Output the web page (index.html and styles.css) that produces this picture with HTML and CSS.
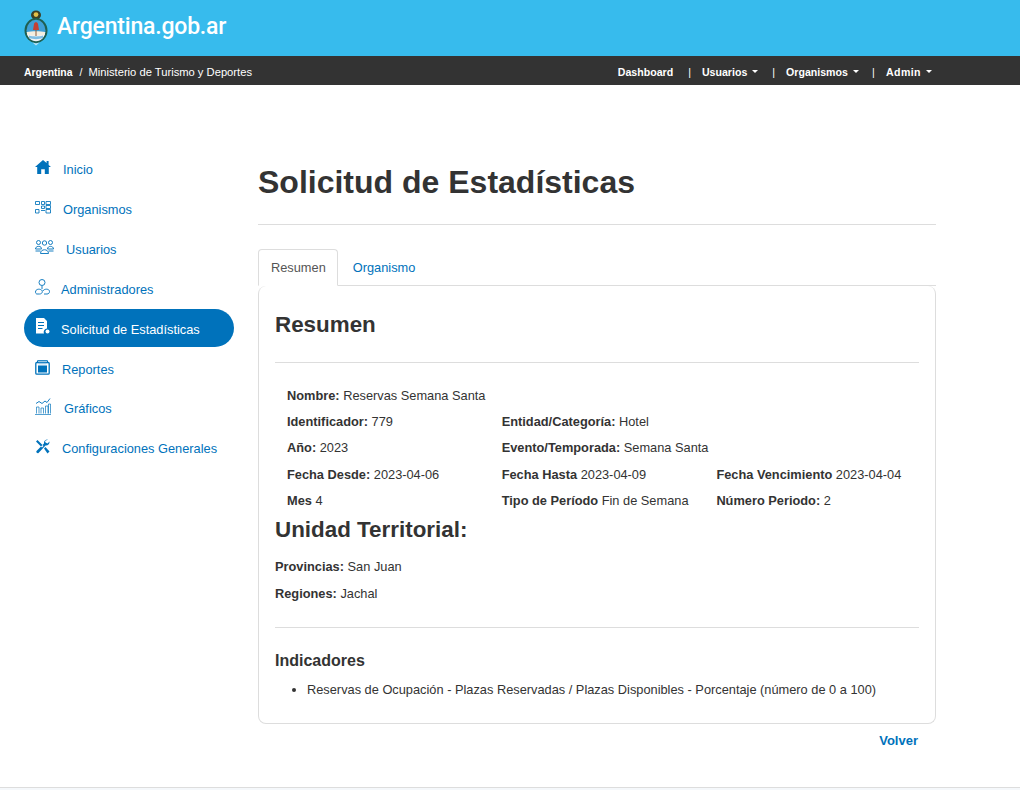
FILE: index.html
```html
<!DOCTYPE html>
<html lang="es">
<head>
<meta charset="utf-8">
<title>Solicitud de Estadísticas</title>
<link rel="stylesheet" href="styles.css">
</head>
<body>
<header class="brand">
  <svg class="crest" width="24" height="36" viewBox="0 0 24 36">
    <ellipse cx="12" cy="5" rx="5" ry="4.500" fill="#3c4028"/>
    <circle cx="12" cy="4.600" r="2.400" fill="#e3c04a"/>
    <ellipse cx="12" cy="20.500" rx="11.500" ry="12.500" fill="#1f5f50"/>
    <ellipse cx="12" cy="20.500" rx="9.500" ry="10.700" fill="#3f9fd6"/>
    <path d="M2.700 22h18.600c-.6 5.500-4.500 9.200-9.300 9.200S3.300 27.500 2.700 22z" fill="#f4f4f4"/>
    <path d="M3 22c4-1 14-1 18 0v2.500c-4 1.500-14 1.500-18 0z" fill="#f4efe0"/>
    <path d="M5 25.500c4 1.200 10 1.200 14 0v2.500c-4 1.500-10 1.500-14 0z" fill="#7fbfe4"/>
    <path d="M9 20l1-6c.4-2.500 3.600-2.500 4 0l1 6z" fill="#c63f33"/>
    <path d="M11.500 20h1v6h-1z" fill="#8a5a3a"/>
    <path d="M8.500 32.500l3.500 3 3.500-3-3.500 1z" fill="#bfe3f4"/>
  </svg>
  <span class="brand-name">Argentina.gob.ar</span>
</header>
<nav class="topbar">
  <div class="crumbs"><a class="crumb-root">Argentina</a><span class="crumb-sep">/</span><a class="crumb-leaf">Ministerio de Turismo y Deportes</a></div>
  <ul class="menu">
    <li class="menu-item">Dashboard</li>
    <li class="menu-item menu-sep">Usuarios<i class="caret"></i></li>
    <li class="menu-item menu-sep menu-org">Organismos<i class="caret"></i></li>
    <li class="menu-item menu-sep menu-admin">Admin<i class="caret"></i></li>
  </ul>
</nav>
<div class="layout">
  <aside class="side">
    <a class="side-link">
      <svg class="ico" width="16" height="14" viewBox="0 0 16 14"><path d="M8 0L0 7h2.200v7h4V9.200h3.600V14h4V7H16l-2.400-2.100V1h-2v2.100z" fill="#0072bb"/></svg>
      <span class="lbl-inicio">Inicio</span></a>
    <a class="side-link">
      <svg class="ico" width="16" height="13" viewBox="0 0 16 13" fill="none" stroke="#0072bb" stroke-width=".85"><path d="M.5 .5h4v3h-4zM6.500 .5h3v3h-3zM11 .5h4.500v3H11zM11 4.500h4.500v3H11zM11 8.500h4.500v3.500H11zM6.500 5h3v2.500h-3zM.5 8.500h3.500v3.500H.5zM6 9.500h4"/></svg>
      <span class="lbl-inicio">Organismos</span></a>
    <a class="side-link">
      <svg class="ico ico-wide" width="19" height="14" viewBox="0 0 19 14" fill="none" stroke="#0072bb" stroke-width=".9"><circle cx="3.500" cy="2.500" r="2"/><circle cx="9.500" cy="3" r="2.200"/><circle cx="15.500" cy="2.500" r="2"/><path d="M.5 9c0-3.500 6-3.500 6-.5v.5zM12.500 9c0-3.500 6-3.500 6 0zM5.500 13.500c0-5 8-5 8 0zM.5 11h5M13.500 11h5"/></svg>
      <span class="lbl-users">Usuarios</span></a>
    <a class="side-link">
      <svg class="ico" width="15" height="16" viewBox="0 0 15 16" fill="none" stroke="#0072bb" stroke-width=".9"><circle cx="7" cy="3.500" r="3"/><path d="M7 7v3M.5 13c0-3 4-3.500 6-2 1.500 1 1 4-2 4H2C1 15 .5 14 .5 13zM8 12c1-2.500 6.500-2.500 6.500.5 0 1.500-1 2.500-2.500 2.500H9"/></svg>
      <span class="lbl-admin">Administradores</span></a>
    <a class="side-link side-active">
      <svg class="ico ico-doc" width="15" height="16" viewBox="0 0 15 16"><path d="M1 0h8l3 3v7.500a3.500 3.500 0 0 0-3 5H1z" fill="#fff"/><path d="M3 4.500h6M3 7.500h6M3 10.500h4.500" stroke="#0072bb" stroke-width="1.200"/><circle cx="12.500" cy="13.500" r="2" fill="#fff"/></svg>
      <span class="lbl-admin">Solicitud de Estadísticas</span></a>
    <a class="side-link">
      <svg class="ico" width="15" height="15" viewBox="0 0 15 15"><path d="M2.500 2V.7h10V2" fill="none" stroke="#0072bb"/><rect x=".8" y="2.500" width="13.400" height="11.700" rx="1" fill="none" stroke="#0072bb" stroke-width="1.300"/><rect x="3" y="5.500" width="9" height="7" fill="#0072bb"/><rect x="3.500" y="2.800" width="8" height="1.500" fill="#9cc8e6"/></svg>
      <span class="lbl-inicio">Reportes</span></a>
    <a class="side-link side-short">
      <svg class="ico ico-wide" width="16" height="17" viewBox="0 0 16 17" fill="none" stroke="#0072bb" stroke-width=".9"><path d="M0 16.500h16M1.500 15.500V9h2.500v6.500M6 15.500V10h2.500v5.500M10.500 15.500V8H13v7.500M13.500 15.500V6h2v9.500" stroke-opacity=".75"/><path d="M1 5.500l3-2 3 2 3-2.500 2 1.500 3-4"/></svg>
      <span class="lbl-graf">Gráficos</span></a>
    <a class="side-link">
      <svg class="ico" width="15" height="15" viewBox="0 0 15 15" fill="#0072bb"><path d="M1 2.500L2.500 1l5 5 1 1L7 8.500zM13 .5a3.500 3.500 0 0 0-4 4L1.500 12a1.500 1.500 0 0 0 2 2L10.500 6.500a3.500 3.500 0 0 0 4-4l-2 2-2-1-.5-1.500z"/><path d="M9 9.500l1.500-1.500 4 4.500-2 2z"/></svg>
      <span class="lbl-inicio">Configuraciones Generales</span></a>
  </aside>
  <main class="content">
    <h1 class="page-title">Solicitud de Estadísticas</h1>
    <hr class="rule rule-title">
    <div class="tabs">
      <a class="tab tab-active">Resumen</a>
      <a class="tab">Organismo</a>
    </div>
    <section class="panel">
      <h2 class="panel-title">Resumen</h2>
      <hr class="rule rule-panel">
      <div class="facts">
        <div class="fact-row"><div class="fact"><b>Nombre:</b> Reservas Semana Santa</div></div>
        <div class="fact-row"><div class="fact"><b>Identificador:</b> 779</div><div class="fact"><b>Entidad/Categoría:</b> Hotel</div></div>
        <div class="fact-row"><div class="fact"><b>Año:</b> 2023</div><div class="fact"><b>Evento/Temporada:</b> Semana Santa</div></div>
        <div class="fact-row"><div class="fact"><b>Fecha Desde:</b> 2023-04-06</div><div class="fact"><b>Fecha Hasta</b> 2023-04-09</div><div class="fact"><b>Fecha Vencimiento</b> 2023-04-04</div></div>
        <div class="fact-row"><div class="fact"><b>Mes</b> 4</div><div class="fact"><b>Tipo de Período</b> Fin de Semana</div><div class="fact"><b>Número Periodo:</b> 2</div></div>
      </div>
      <h3 class="sub-title">Unidad Territorial:</h3>
      <p class="line"><b>Provincias:</b> San Juan</p>
      <p class="line"><b>Regiones:</b> Jachal</p>
      <hr class="rule rule-ind">
      <h4 class="ind-title">Indicadores</h4>
      <ul class="ind-list"><li>Reservas de Ocupación - Plazas Reservadas / Plazas Disponibles - Porcentaje (número de 0 a 100)</li></ul>
    </section>
    <div class="back"><a class="back-link">Volver</a></div>
  </main>
</div>
<footer class="foot"></footer>
</body>
</html>
```
FILE: styles.css
```css
* { box-sizing: border-box; }
html, body { margin: 0; padding: 0; }
body { font-family: "Liberation Sans", Arial, sans-serif; font-size: 12.800px; line-height: 20px; color: #333; background: #fff; height: 790px; overflow: hidden; }
.brand { height: 56px; background: #37bbed; display: flex; align-items: center; padding-left: 24px; gap: 9px; }
.crest { display: block; flex: none; }
.brand-name { font-family: Roboto, sans-serif; font-size: 23px; font-weight: 500; color: #fff; letter-spacing: -.2px; margin-top: -2px; }
.topbar { height: 29px; background: #333; display: flex; justify-content: space-between; align-items: center; padding: 2px 88px 0 24px; color: #fff; font-size: 10.600px; font-weight: 700; }
.crumbs { display: flex; align-items: baseline; padding-top: 1px; }
.crumb-root { font-size: 10.400px; }
.crumb-sep { margin: 0 6px 0 7px; font-weight: 400; }
.crumb-leaf { font-weight: 400; font-size: 11.200px; }
.crumb-root, .crumb-leaf { color: #fff; }
.menu { list-style: none; display: flex; margin: 0; padding: 0; }
.menu-item { display: flex; align-items: center; }
.menu-sep { margin-left: 15px; }
.menu-org { margin-left: 14px; }
.menu-admin { margin-left: 13px; letter-spacing: .4px; }
.menu-sep::before { content: "|"; font-weight: 400; margin-right: 11px; }
.caret { width: 0; height: 0; margin-left: 5px; border-left: 3.500px solid transparent; border-right: 3.500px solid transparent; border-top: 3.500px solid #fff; }
.layout { display: flex; padding: 0 84px 0 24px; gap: 24px; height: 702px; }
.side { width: 210px; flex: none; padding-top: 64px; display: flex; flex-direction: column; }
.side-link { height: 40px; flex: none; display: flex; align-items: center; padding: 2px 0 0 11px; color: #0072bb; border-radius: 20px; }
.side-active { background: #0072bb; color: #fff; height: 38px; margin-bottom: 2px; padding-top: 4px; }
.side-short { height: 39px; padding-top: 1px; }
.ico { flex: none; margin-top: -6px; }
.side-active .ico { margin-top: -8px; }
.lbl-inicio { margin-left: 12px; }
.lbl-users { margin-left: 12px; }
.lbl-admin { margin-left: 11px; }
.lbl-graf { margin-left: 13px; }
.content { flex: 1; min-width: 0; padding-top: 77px; }
.page-title { margin: 0; font-size: 32px; line-height: 40px; font-weight: 700; color: #333; }
.rule { border: 0; border-top: 1px solid #ddd; margin: 0; }
.rule-title { margin-top: 22px; }
.tabs { display: flex; margin-top: 24px; height: 37px; border-bottom: 1px solid #ddd; }
.tab { padding: 8px 12px; height: 37px; color: #0072bb; margin-right: 2px; border: 1px solid transparent; }
.tab-active { color: #555; background: #fff; border: 1px solid #ddd; border-bottom-color: #fff; border-radius: 4px 4px 0 0; padding-right: 11px; }
.panel { border: 1px solid #ddd; border-top: 0; border-radius: 8px; padding: 16px; height: 438px; }
.panel-title { margin: 9px 0 0; font-size: 22.400px; line-height: 28px; font-weight: 700; }
.rule-panel { margin-top: 23px; }
.facts { padding: 22.700px 12px 0; }
.fact-row { display: flex; height: 26.400px; }
.fact { width: 214.700px; flex: none; white-space: nowrap; }
.sub-title { margin: -1.700px 0 0; font-size: 22.400px; line-height: 28px; font-weight: 700; }
.line { margin: 13px 0 0; }
.line + .line { margin-top: 7px; }
.rule-ind { margin-top: 23px; }
.ind-title { margin: 23px 0 0; font-size: 16px; line-height: 20px; font-weight: 700; }
.ind-list { margin: 9px 0 0; padding-left: 32px; }
.back { text-align: right; padding: 7px 18px 0 0; }
.back-link { color: #0072bb; font-weight: 700; font-size: 13px; }
.foot { height: 3px; border-top: 1px solid #ddd; background: #f5f8fb; }
```
